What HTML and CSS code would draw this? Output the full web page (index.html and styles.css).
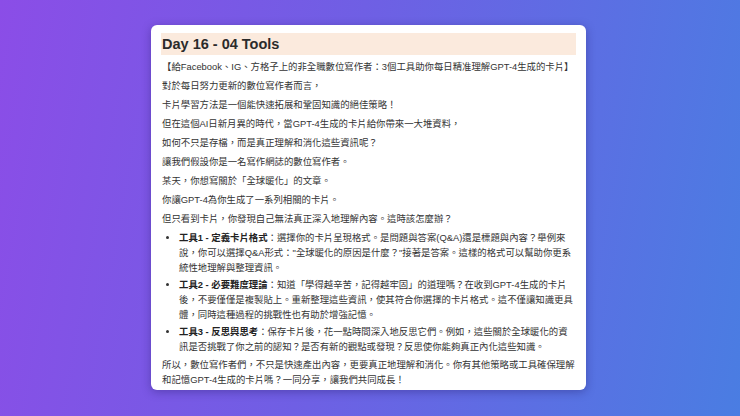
FILE: index.html
```html
<!DOCTYPE html>
<html lang="zh-Hant">
<head>
  <meta charset="UTF-8">
  <meta name="viewport" content="width=device-width, initial-scale=1.0">
  <title>Day 16 - 04 Tools</title>
  <link rel="stylesheet" href="styles.css">
</head>
<body>
  <div class="note-card">
    <h1 class="note-title">Day 16 - 04 Tools</h1>
    <p>【給Facebook、IG、方格子上的非全職數位寫作者：3個工具助你每日精准理解GPT-4生成的卡片】</p>
    <p>對於每日努力更新的數位寫作者而言，</p>
    <p>卡片學習方法是一個能快速拓展和鞏固知識的絕佳策略！</p>
    <p>但在這個AI日新月異的時代，當GPT-4生成的卡片給你帶來一大堆資料，</p>
    <p>如何不只是存檔，而是真正理解和消化這些資訊呢？</p>
    <p>讓我們假設你是一名寫作網誌的數位寫作者。</p>
    <p>某天，你想寫關於「全球暖化」的文章。</p>
    <p>你讓GPT-4為你生成了一系列相關的卡片。</p>
    <p>但只看到卡片，你發現自己無法真正深入地理解內容。這時該怎麼辦？</p>
    <ul class="tool-list">
      <li><strong>工具1 - 定義卡片格式</strong>：選擇你的卡片呈現格式。是問題與答案(Q&amp;A)還是標題與內容？舉例來說，你可以選擇Q&amp;A形式："全球暖化的原因是什麼？"接著是答案。這樣的格式可以幫助你更系統性地理解與整理資訊。</li>
      <li><strong>工具2 - 必要難度理論</strong>：知道「學得越辛苦，記得越牢固」的道理嗎？在收到GPT-4生成的卡片後，不要僅僅是複製貼上。重新整理這些資訊，使其符合你選擇的卡片格式。這不僅讓知識更具體，同時這種過程的挑戰性也有助於增強記憶。</li>
      <li><strong>工具3 - 反思與思考</strong>：保存卡片後，花一點時間深入地反思它們。例如，這些關於全球暖化的資訊是否挑戰了你之前的認知？是否有新的觀點或發現？反思使你能夠真正內化這些知識。</li>
    </ul>
    <p>所以，數位寫作者們，不只是快速產出內容，更要真正地理解和消化。你有其他策略或工具確保理解和記憶GPT-4生成的卡片嗎？一同分享，讓我們共同成長！</p>
  </div>
</body>
</html>
```

FILE: styles.css
```css
body {
  margin: 0;
  height: 416px;
  font-family: "Liberation Sans", "Noto Sans CJK TC", sans-serif;
  background: linear-gradient(100deg, #8b4de7 0%, #6f5fe4 45%, #4a7de2 100%);
  display: flex;
  justify-content: center;
  align-items: flex-start;
}

.note-card {
  margin-top: 25px;
  margin-left: -3px;
  width: 415px;
  height: 345px;
  padding: 8px 10px 12px;
  background: #fff;
  border-radius: 6px;
  box-shadow: 0 2px 10px rgba(30, 20, 90, 0.35);
  color: #333;
  font-size: 9.4px;
  line-height: 15px;
}

.note-title {
  margin: 0 0 4px;
  padding: 2px 1px;
  background: #fbeadd;
  font-size: 14.5px;
  line-height: 18px;
  color: #2b2b2b;
}

p {
  margin: 0 0 4px;
  padding-left: 1px;
}

.tool-list {
  margin: 0 0 3px;
  padding-left: 18px;
}

.tool-list li {
  margin-bottom: 2px;
}

.tool-list strong {
  color: #222;
}
```
